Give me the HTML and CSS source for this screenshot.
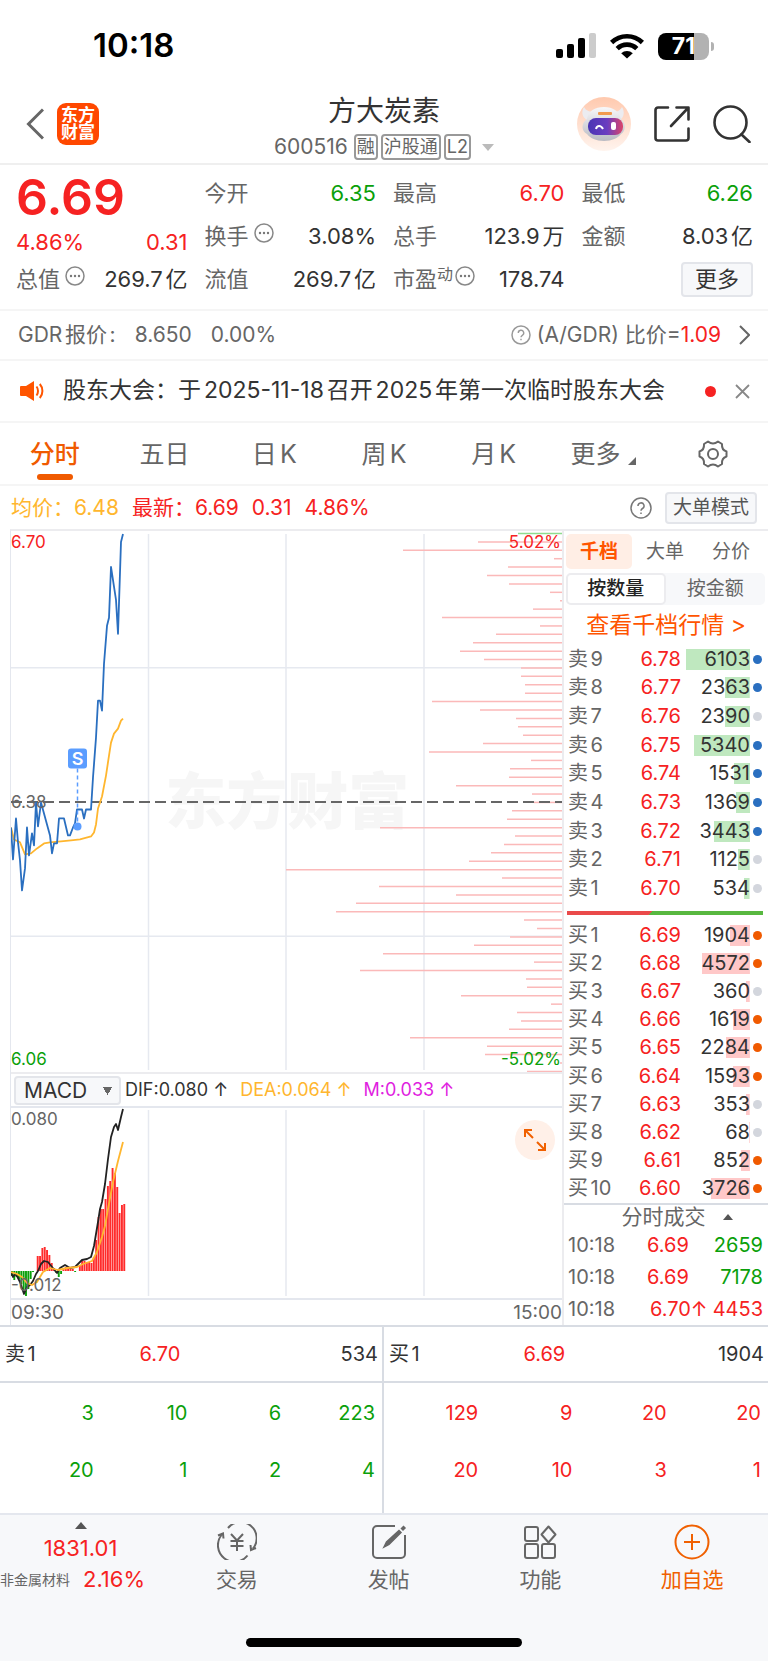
FILE: index.html
```html
<!DOCTYPE html>
<html lang="zh-CN">
<head>
    <meta charset="UTF-8">
    <meta name="viewport" content="width=device-width, initial-scale=1.0">
    <title>方大炭素 600516</title>
    <link rel="stylesheet" href="styles.css">
</head>
<body>
    <div class="status-bar">
        <span class="time">10:18</span>
        <div class="status-icons">
            <svg width="40" height="26" viewBox="0 0 40 26">
                <rect x="0" y="16" width="7" height="9" rx="2"/>
                <rect x="11" y="11" width="7" height="14" rx="2"/>
                <rect x="22" y="5" width="7" height="20" rx="2"/>
                <rect x="33" y="0" width="7" height="25" rx="2" fill="#ccc"/>
            </svg>
            <svg width="34" height="26" viewBox="0 0 34 26">
                <g fill="none" stroke="#000" stroke-width="4.6">
                    <path d="M1.6 9.5a22 22 0 0 1 30.8 0"/>
                    <path d="M7.2 15.6a14 14 0 0 1 19.6 0"/>
                </g>
                <path d="M11.2 20.2a8.5 8.5 0 0 1 11.6 0L17 25.6z"/>
            </svg>
            <div class="battery"><span>71</span></div>
        </div>
    </div>

    <header class="header">
        <div class="header-left">
            <button class="icon-button" aria-label="返回">
                <svg width="18" height="32" viewBox="0 0 18 32" fill="none" stroke="#666" stroke-width="3"><path d="M17 1.5L2.5 16 17 30.5"/></svg>
            </button>
            <a href="#" class="logo">东方<br>财富</a>
        </div>
        <div class="header-title">
            <h1>方大炭素</h1>
            <div class="code">
                <span>600516</span>
                <span class="tag">融</span>
                <span class="tag">沪股通</span>
                <span class="tag">L2</span>
                <svg class="code-arrow" width="12" height="7" viewBox="0 0 12 7"><path d="M0 0h12L6 7z" fill="#bbb"/></svg>
            </div>
        </div>
        <div class="header-right">
            <button class="icon-button" aria-label="智能助手">
                <svg width="54" height="54" viewBox="0 0 54 54">
                    <defs>
                        <linearGradient id="halo" x1="0" y1="0" x2="0" y2="1"><stop offset="0" stop-color="#ffc9ae"/><stop offset="1" stop-color="#fff4ee"/></linearGradient>
                        <linearGradient id="visor" x1="0" y1="0" x2="1" y2="0"><stop offset="0" stop-color="#4a35b4"/><stop offset="0.55" stop-color="#6a3cc0"/><stop offset="1" stop-color="#dc4468"/></linearGradient>
                        <linearGradient id="shell" x1="0" y1="0" x2="0" y2="1"><stop offset="0" stop-color="#f8f8fa"/><stop offset="1" stop-color="#b9bac2"/></linearGradient>
                    </defs>
                    <circle cx="27" cy="27" r="27" fill="url(#halo)"/>
                    <path d="M7 10c-3 5-2 10 3 13l8-8c-5 0-9-1-11-5zM45 10c3 5 2 10-2 13l-8-8c5 0 8-1 10-5z" fill="#ececf0"/>
                    <path d="M10 22C11 14 18 10 27 10s15 4 17 12c5 4 5 12 0 15-3 4-9 7-17 7s-14-3-17-7c-6-3-6-11 0-15z" fill="url(#shell)"/>
                    <rect x="21" y="15" width="14" height="3" rx="1" fill="#f19a50"/>
                    <rect x="11" y="21" width="35" height="17" rx="8" fill="url(#visor)"/>
                    <path d="M19 32c1-4 5-4 7 0" fill="none" stroke="#fff" stroke-width="2"/>
                    <rect x="34" y="25" width="5" height="8" rx="2" fill="#fff"/>
                </svg>
            </button>
            <button class="icon-button" aria-label="分享">
                <svg width="36" height="36" viewBox="0 0 36 36" fill="none" stroke="#333" stroke-width="2.6" stroke-linecap="round" stroke-linejoin="round">
                    <path d="M14 1.5H4A2.5 2.5 0 0 0 1.5 4v28A2.5 2.5 0 0 0 4 34.5h28A2.5 2.5 0 0 0 34.5 32V22.5M22.5 1.5h12v12M34 2L17 20"/>
                </svg>
            </button>
            <button class="icon-button" aria-label="搜索">
                <svg width="38" height="38" viewBox="0 0 38 38" fill="none" stroke="#333" stroke-width="2.6" stroke-linecap="round"><circle cx="17.5" cy="17.5" r="16"/><path d="M28.5 29.5l8 7.5"/></svg>
            </button>
        </div>
    </header>

    <section class="quote">
        <div class="quote-col">
            <div class="price">6.69</div>
            <div class="change"><span>4.86%</span><span>0.31</span></div>
            <div class="item"><span class="label">总值<svg class="dots" viewBox="0 0 20 20"><use href="#dots"/></svg></span><span>269.7亿</span></div>
        </div>
        <div class="quote-col">
            <div class="item"><span class="label">今开</span><span class="green">6.35</span></div>
            <div class="item"><span class="label">换手<svg class="dots" viewBox="0 0 20 20"><use href="#dots"/></svg></span><span>3.08%</span></div>
            <div class="item"><span class="label">流值</span><span>269.7亿</span></div>
        </div>
        <div class="quote-col">
            <div class="item"><span class="label">最高</span><span class="red">6.70</span></div>
            <div class="item"><span class="label">总手</span><span>123.9万</span></div>
            <div class="item"><span class="label">市盈<sup>动</sup><svg class="dots" viewBox="0 0 20 20"><g id="dots"><circle cx="10" cy="10" r="9" fill="none" stroke="#888" stroke-width="1.5"/><circle cx="6" cy="10" r="1.2" fill="#777"/><circle cx="10" cy="10" r="1.2" fill="#777"/><circle cx="14" cy="10" r="1.2" fill="#777"/></g></svg></span><span>178.74</span></div>
        </div>
        <div class="quote-col">
            <div class="item"><span class="label">最低</span><span class="green">6.26</span></div>
            <div class="item"><span class="label">金额</span><span>8.03亿</span></div>
            <div class="item item-more"><button class="box-button">更多</button></div>
        </div>
    </section>

    <section class="gdr">
        <span>GDR报价:</span><span>8.650</span><span>0.00%</span>
        <a href="#" class="gdr-link">
            <svg width="20" height="20" viewBox="0 0 20 20"><circle cx="10" cy="10" r="9" fill="none" stroke="#999" stroke-width="1.5"/><path d="M7.3 8a2.7 2.7 0 1 1 4 2.3c-1 .6-1.3 1-1.3 2M10 13.7v1.5" fill="none" stroke="#999" stroke-width="1.4"/></svg>
            <span>(A/GDR) 比价=<b>1.09</b></span>
            <svg class="chevron" width="11" height="20" viewBox="0 0 11 20" fill="none" stroke="#666" stroke-width="2"><path d="M1 1l9 9-9 9"/></svg>
        </a>
    </section>

    <section class="notice">
        <svg width="24" height="22" viewBox="0 0 24 22"><path d="M1 6h5l8-5v20l-8-5H1a1 1 0 0 1-1-1V7a1 1 0 0 1 1-1z" fill="#ff5500"/><path d="M16.5 6.5c2 2.5 2 6.5 0 9M19.8 4c3.5 4 3.5 10 0 14" fill="none" stroke="#ff5500" stroke-width="2"/></svg>
        <a href="#">股东大会：于2025-11-18召开2025年第一次临时股东大会</a>
        <i class="unread"></i>
        <button class="icon-button" aria-label="关闭"><svg width="15" height="15" viewBox="0 0 15 15" stroke="#888" stroke-width="1.8"><path d="M1 1l13 13M14 1L1 14"/></svg></button>
    </section>

    <nav class="tabs">
        <button class="active">分时</button>
        <button>五日</button>
        <button>日K</button>
        <button>周K</button>
        <button>月K</button>
        <button class="tab-more">更多<svg width="8" height="8" viewBox="0 0 8 8"><path d="M8 0v8H0z" fill="#666"/></svg></button>
        <button aria-label="设置">
            <svg width="30" height="28" viewBox="0 0 30 28" fill="none" stroke="#666" stroke-width="2" stroke-linejoin="round"><path d="M10 1.5Q15 5.5 20 1.5L24 4Q23.5 10 28.5 11.5V16.5Q23.5 18 24 24L20 26.5Q15 22.5 10 26.5L6 24Q6.5 18 1.5 16.5V11.5Q6.5 10 6 4Z"/><circle cx="15" cy="14" r="5"/></svg>
        </button>
    </nav>

    <section class="info">
        <span class="orange">均价：6.48</span>
        <span class="red">最新：6.69</span>
        <span class="red">0.31</span>
        <span class="red">4.86%</span>
        <svg class="info-help" width="22" height="22" viewBox="0 0 22 22"><circle cx="11" cy="11" r="10" fill="none" stroke="#777" stroke-width="1.5"/><path d="M8 9a3 3 0 1 1 4.5 2.5c-1.2.7-1.5 1.2-1.5 2.3M11 15.5V17" fill="none" stroke="#777" stroke-width="1.5"/></svg>
        <button class="box-button box-button-small">大单模式</button>
    </section>

    <main class="board">
        <div class="charts">
            <div class="chart">
                <div class="watermark">东方财富</div>
                <svg viewBox="0 0 551 542" preserveAspectRatio="none">
                    <path class="grid" d="M137.5 3V540M275 3V540M413 3V540M0 137H551M0 406H551"/>
                    <g id="volume"></g>
                    <path d="M0 271.5H551" stroke="#666" stroke-width="2" stroke-dasharray="11 5"/>
                    <polyline class="line" stroke="#ffb62e" points="0,297 3,309 9,312 14,324 20,323 26,318 33,313 39,312 50,311 60,310 69,309 80,306 83,302 85,294 87,278 91,266 95,245 98,225 100,212 103,203 107,198 110,190 112,188"/>
                    <polyline class="line" stroke="#2a6fc0" points="0,297 2,329 5,288 7,312 9,330 11,360 14,338 16,297 18,325 21,303 23,315 25,272 27,296 30,272 39,305 41,323 43,313 46,313 48,288 53,288 57,305 59,305 62,297 64,293 66,279 71,279 73,288 75,279 80,279 82,247 85,207 87,170 89,170 91,180 93,133 96,95 98,87 100,36 105,69 107,103 110,11 112,3"/>
                    <path d="M66.5 238V292" stroke="#5b9dff" stroke-width="1.5" stroke-dasharray="4 3"/>
                    <circle cx="66.5" cy="296" r="4" fill="#5b9dff"/>
                    <rect x="57" y="218" width="19" height="20" rx="3" fill="#5b9dff"/>
                    <text x="66.5" y="234" class="sell-mark">S</text>
                </svg>
                <span class="mark mark-top red">6.70</span>
                <span class="mark mark-middle">6.38</span>
                <span class="mark mark-bottom green">6.06</span>
                <span class="mark mark-top mark-right red">5.02%</span>
                <span class="mark mark-bottom mark-right green">-5.02%</span>
            </div>
            <div class="indicator">
                <select class="indicator-select" aria-label="指标">
                    <option>MACD</option>
                    <option>KDJ</option>
                </select>
                <span>DIF:0.080 ↑</span>
                <span class="orange">DEA:0.064 ↑</span>
                <span class="purple">M:0.033 ↑</span>
            </div>
            <div class="macd">
                <svg viewBox="0 0 551 190" preserveAspectRatio="none">
                    <path class="grid" d="M137.5 2V188M275 2V188M413 2V188"/>
                    <g id="macd"></g>
                    <polyline class="line" stroke="#222" points="0,164 2,169 4,166 6,168 9,174 12,183 13,186 16,179 19,177 22,173 25,166 27,163 30,156 33,153 37,154 41,159 46,165 49,160 54,157 59,160 64,159 71,152 76,151 80,149 83,138 87,114 89,101 91,94 94,76 97,51 100,29 103,19 105,16 107,22 110,9 112,1"/>
                    <polyline class="line" stroke="#ffb62e" points="0,164 6,166 11,169 16,175 21,177 26,174 32,164 39,160 47,162 56,160 66,159 72,156 81,153 86,144 91,129 94,118 97,101 102,74 107,53 112,34"/>
                </svg>
                <span class="mark mark-top">0.080</span>
                <span class="mark mark-bottom">-0.012</span>
                <button class="expand" aria-label="全屏">
                    <svg width="22" height="22" viewBox="0 0 22 22" fill="none" stroke="#f06000" stroke-width="2"><path d="M1 8V1h7M1 1l8 8M21 14v7h-7M21 21l-8-8"/></svg>
                </button>
            </div>
            <div class="axis"><span>09:30</span><span>15:00</span></div>
        </div>

        <aside class="book">
            <div class="book-tabs">
                <button class="active">千档</button>
                <button>大单</button>
                <button>分价</button>
            </div>
            <div class="segment">
                <button class="active">按数量</button>
                <button>按金额</button>
            </div>
            <a href="#" class="book-link">查看千档行情 &gt;</a>
            <table class="levels levels-sell" id="sell"></table>
            <div class="ratio"></div>
            <table class="levels levels-buy" id="buy"></table>
            <button class="trades-title">分时成交<svg width="10" height="6" viewBox="0 0 10 6"><path d="M0 6h10L5 0z" fill="#555"/></svg></button>
            <table class="trades">
                <tr><td>10:18</td><td>6.69</td><td class="green">2659</td></tr>
                <tr><td>10:18</td><td>6.69</td><td class="green">7178</td></tr>
                <tr><td>10:18</td><td class="up">6.70↑</td><td class="red">4453</td></tr>
            </table>
        </aside>
    </main>

    <section class="queue">
        <div class="queue-side">
            <div class="queue-head"><span>卖1</span><span class="red">6.70</span><span>534</span></div>
            <table class="green">
                <tr><td>3</td><td>10</td><td>6</td><td>223</td></tr>
                <tr><td>20</td><td>1</td><td>2</td><td>4</td></tr>
            </table>
        </div>
        <div class="queue-side">
            <div class="queue-head"><span>买1</span><span class="red">6.69</span><span>1904</span></div>
            <table class="red">
                <tr><td>129</td><td>9</td><td>20</td><td>20</td></tr>
                <tr><td>20</td><td>10</td><td>3</td><td>1</td></tr>
            </table>
        </div>
    </section>

    <footer class="footer">
        <div class="toolbar">
            <a href="#" class="sector">
                <svg width="12" height="7" viewBox="0 0 12 7"><path d="M0 7h12L6 0z" fill="#555"/></svg>
                <span class="sector-index">1831.01</span>
                <span class="sector-row"><small>非金属材料</small>2.16%</span>
            </a>
            <a href="#">
                <svg width="40" height="36" viewBox="0 0 40 36" fill="none" stroke="#666" stroke-width="2"><path d="M11 4A16 16 0 0 1 36 24.500M30.500 31.500A16 16 0 0 1 4.500 11M1 11.500l5-2 .5 5M39 24l-5 2-.5-5"/><path d="M14 10l6 6.500 6-6.500M20 16.500V27M13.500 17h13M13.500 22h13"/></svg>
                <span>交易</span>
            </a>
            <a href="#">
                <svg width="36" height="36" viewBox="0 0 36 36" fill="none" stroke="#666" stroke-width="2"><path d="M24 2H6a4 4 0 0 0-4 4v24a4 4 0 0 0 4 4h24a4 4 0 0 0 4-4V11"/><path d="M13 23l2.500-5L28 6.500l2 2L18 20.500zM30.500 4.500L32.500 2.500l1.500 1.500-2 2z" fill="#666" stroke-width="1.5"/></svg>
                <span>发帖</span>
            </a>
            <a href="#">
                <svg width="34" height="36" viewBox="0 0 34 36" fill="none" stroke="#666" stroke-width="2"><rect x="2" y="3" width="13" height="14" rx="2"/><rect x="2" y="20" width="13" height="14" rx="2"/><rect x="19" y="20" width="13" height="14" rx="2"/><path d="M25.500 2.500l7 8-7 8-7-8z" stroke-linejoin="round"/></svg>
                <span>功能</span>
            </a>
            <a href="#" class="add">
                <svg width="36" height="36" viewBox="0 0 36 36" fill="none" stroke="#f06000" stroke-width="2"><circle cx="18" cy="18" r="16.5"/><path d="M18 10v16M10 18h16"/></svg>
                <span>加自选</span>
            </a>
        </div>
        <div class="home-bar"></div>
    </footer>

    <script src="script.js"></script>
</body>
</html>
```
FILE: styles.css
```css
* {
    box-sizing: border-box;
}
body {
    margin: 0;
    background-color: #fff;
    color: #333;
    font-family: Inter, "Noto Sans CJK SC", sans-serif;
    font-size: 21px;
    line-height: 1.2;
    text-autospace: normal;
}
button,
select {
    font: inherit;
    color: inherit;
    background: none;
    border: none;
    padding: 0;
    margin: 0;
    cursor: pointer;
}
a {
    color: inherit;
    text-decoration: none;
}
svg {
    display: block;
    flex-shrink: 0;
}
table {
    width: 100%;
    border-collapse: collapse;
    table-layout: fixed;
}
td {
    padding: 0;
}
.red {
    color: #f62222;
}
.green {
    color: #0aa00a;
}
.orange {
    color: #ffb62e;
}
.purple {
    color: #e01ee0;
}
.icon-button {
    display: flex;
}

/* status bar */
.status-bar {
    display: flex;
    justify-content: space-between;
    align-items: center;
    height: 85px;
    padding: 7px 57px 0 93px;
    color: #000;
}
.time {
    font-size: 33px;
    font-weight: 600;
}
.status-icons {
    display: flex;
    align-items: center;
    gap: 14px;
}
.battery {
    position: relative;
    width: 51px;
    height: 27px;
    margin-right: 2px;
    border-radius: 8px;
    background: linear-gradient(to right, #000 71%, #b2b2b2 71%);
    color: #fff;
    font-size: 23px;
    font-weight: 700;
    line-height: 27px;
    text-align: center;
}
.battery::after {
    content: "";
    position: absolute;
    right: -5px;
    top: 9px;
    width: 3px;
    height: 9px;
    border-radius: 0 3px 3px 0;
    background-color: #b2b2b2;
}

/* header */
.header {
    display: grid;
    grid-template-columns: 1fr auto 1fr;
    align-items: center;
    padding: 0 17px;
    height: 80px;
    border-bottom: 2px solid #efefef;
}
.header-left,
.header-right {
    display: flex;
    align-items: center;
}
.header-left {
    gap: 13px;
    padding-left: 9px;
}
.header-right {
    justify-content: flex-end;
    gap: 23px;
}
.logo {
    padding: 4px;
    border-radius: 9px;
    background-color: #ff4800;
    color: #fff;
    font-size: 17px;
    font-weight: 700;
    line-height: 17px;
}
.header-title h1 {
    margin: 0;
    font-size: 28px;
    font-weight: 400;
    line-height: 46px;
    text-align: center;
}
.code {
    display: flex;
    align-items: center;
    gap: 3px;
    color: #666;
}
.code span:first-child {
    margin-right: 3px;
}
.tag {
    border: 2px solid #999;
    border-radius: 4px;
    padding: 0 1px;
    font-size: 18px;
    line-height: 22px;
}
.code-arrow {
    margin-left: 8px;
}

/* quote */
.quote {
    display: grid;
    grid-template-columns: repeat(4, 1fr);
    gap: 17px;
    padding: 7px 15px 8px 16px;
    font-size: 22px;
    border-bottom: 2px solid #f5f5f5;
}
.price {
    color: #f62222;
    font-size: 50px;
    font-weight: 600;
    line-height: 50px;
}
.change {
    display: flex;
    justify-content: space-between;
    color: #f62222;
    line-height: 36px;
    padding-top: 2px;
    margin-bottom: -2px;
}
.item {
    display: flex;
    justify-content: space-between;
    align-items: center;
    height: 43px;
    white-space: nowrap;
}
.item-more {
    justify-content: flex-end;
}
.label {
    display: flex;
    color: #666;
}
.label sup {
    font-size: 16px;
    line-height: 16px;
    vertical-align: top;
}
.dots {
    width: 20px;
    height: 20px;
    margin-left: 5px;
}
.label sup + .dots {
    margin-left: 2px;
}
.box-button {
    padding: 0 12px;
    border: 2px solid #e3e5ea;
    border-radius: 4px;
    background-color: #f7f8fa;
    line-height: 31px;
}
.box-button-small {
    padding: 0 6px;
    color: #555;
    font-size: 19px;
    line-height: 28px;
}

/* GDR and notice */
.gdr {
    display: flex;
    align-items: center;
    gap: 19px;
    height: 50px;
    padding: 0 18px;
    color: #666;
    border-bottom: 2px solid #f5f5f5;
}
.gdr-link {
    display: flex;
    align-items: center;
    gap: 6px;
    margin-left: auto;
}
.gdr-link b {
    color: #f62222;
    font-weight: 400;
}
.chevron {
    margin-left: 12px;
}
.notice {
    display: flex;
    align-items: center;
    height: 62px;
    padding: 0 18px 0 20px;
    font-size: 23px;
    border-bottom: 2px solid #f5f5f5;
}
.notice a {
    margin: 0 auto 0 19px;
    white-space: nowrap;
}
.unread {
    width: 11px;
    height: 11px;
    margin-right: 19px;
    border-radius: 50%;
    background-color: #f62222;
}

/* period tabs */
.tabs {
    display: grid;
    grid-template-columns: repeat(7, 1fr);
    height: 63px;
    color: #666;
    font-size: 25px;
    border-bottom: 2px solid #f5f5f5;
}
.tabs button {
    position: relative;
    display: flex;
    align-items: center;
    justify-content: center;
}
.tabs .active {
    color: #f05a00;
    font-weight: 500;
}
.tabs .active::after {
    content: "";
    position: absolute;
    bottom: 4px;
    width: 36px;
    height: 6px;
    border-radius: 3px;
    background-color: #f05a00;
}
.tab-more svg {
    align-self: flex-end;
    margin: 0 0 19px 8px;
}
.info {
    display: flex;
    align-items: center;
    gap: 13px;
    height: 43px;
    padding: 0 11px;
}
.info-help {
    margin-left: auto;
}

/* charts */
.board {
    display: grid;
    grid-template-columns: 1fr 206px;
    border-bottom: 2px solid #d8dce3;
}
.charts {
    margin-left: 10px;
    border-top: 2px solid #ececef;
    border-left: 1px solid #e4e7ee;
}
.chart,
.macd {
    position: relative;
    font-size: 17px;
    color: #666;
}
.chart svg {
    position: relative;
    width: 100%;
    height: 541px;
}
.macd > svg {
    width: 100%;
    height: 190px;
}
.grid {
    stroke: #e6e9f0;
    stroke-width: 1.5;
}
.line {
    fill: none;
    stroke-width: 1.8;
    stroke-linejoin: round;
}
.sell-mark {
    fill: #fff;
    font-size: 18px;
    font-weight: 600;
    text-anchor: middle;
}
.watermark {
    position: absolute;
    top: 50%;
    left: 28%;
    margin-top: -38px;
    color: #f6f6f6;
    font-size: 61px;
    font-weight: 900;
    line-height: 76px;
}
.mark {
    position: absolute;
    left: 0;
    line-height: 20px;
}
.mark-top {
    top: 1px;
}
.mark-middle {
    top: 261px;
}
.mark-bottom {
    bottom: 3px;
}
.mark-right {
    left: auto;
    right: 1px;
}
.indicator {
    display: flex;
    align-items: center;
    gap: 12px;
    height: 36px;
    font-size: 18px;
    border-top: 2px solid #ececef;
    border-bottom: 2px solid #e4e7ee;
}
.indicator-select {
    width: 107px;
    height: 29px;
    margin: 0 -8px 0 3px;
    padding: 0 8px;
    border: 2px solid #e3e5ea;
    border-radius: 4px;
    background: conic-gradient(from -30deg at 50% 100%, #666 60deg, transparent 0) no-repeat 87px 9px / 9px 8px, #f7f8fa;
    font-size: 21px;
    appearance: none;
}
.expand {
    position: absolute;
    top: 12px;
    right: 7px;
    display: flex;
    align-items: center;
    justify-content: center;
    width: 40px;
    height: 40px;
    border-radius: 50%;
    background-color: #fff0e8;
}
.axis {
    display: flex;
    justify-content: space-between;
    height: 27px;
    border-top: 2px solid #e4e7ee;
    color: #666;
    font-size: 19px;
    line-height: 26px;
}

/* order book */
.book {
    display: flex;
    flex-direction: column;
    border-top: 2px solid #ececef;
    border-left: 2px solid #ececef;
}
.book-tabs {
    display: grid;
    grid-template-columns: repeat(3, 66px);
    margin: 3px 2px 4px;
    color: #666;
    font-size: 19px;
    line-height: 35px;
}
.book-tabs .active {
    border-radius: 5px;
    background-color: #ffeee5;
    color: #ff5500;
    font-weight: 700;
}
.segment {
    display: grid;
    grid-template-columns: 1fr 1fr;
    margin: 0 3px 0 2px;
    border-radius: 5px;
    background-color: #f7f8fa;
    color: #666;
    font-size: 19px;
    line-height: 28px;
}
.segment button {
    border: 2px solid transparent;
}
.segment .active {
    border-color: #ececef;
    border-radius: 5px;
    background-color: #fff;
    color: #222;
    font-weight: 500;
}
.book-link {
    color: #ff5500;
    font-size: 23px;
    line-height: 40px;
    text-align: center;
}
.levels {
    height: 258px;
    font-size: 20px;
    line-height: 21px;
}
.levels-buy {
    height: 282px;
}
.levels td:first-child {
    width: 54px;
    padding-left: 4px;
    color: #666;
    white-space: nowrap;
}
.levels td:nth-child(2) {
    width: 63px;
    color: #f62222;
    text-align: right;
}
.levels td:nth-child(3) {
    width: 69px;
    padding-left: 5px;
}
.amount {
    display: block;
    text-align: right;
    background: linear-gradient(#bfe8bf, #bfe8bf) no-repeat right / var(--bar) 100%;
}
.levels-buy .amount {
    background-image: linear-gradient(#ffc8c8, #ffc8c8);
}
.dot {
    display: block;
    width: 9px;
    height: 9px;
    margin-left: 3px;
    border-radius: 50%;
    background-color: #d3d6dd;
}
.levels-sell .big {
    background-color: #2a6fc0;
}
.levels-buy .big {
    background-color: #f05a00;
}
.ratio {
    height: 4px;
    margin: 8px 5px 6px 3px;
    background: linear-gradient(135deg, #ea4a4a 43%, #58b840 43%);
}
.trades-title {
    display: flex;
    align-items: center;
    justify-content: center;
    gap: 17px;
    padding-left: 22px;
    border-top: 2px solid #d8dce3;
    color: #666;
    line-height: 24px;
}
.trades {
    font-size: 20px;
    line-height: 32px;
}
.trades td:first-child {
    padding-left: 4px;
    color: #666;
}
.trades td:nth-child(2) {
    padding-left: 4px;
    color: #f62222;
    text-align: center;
}
.trades td:last-child {
    padding-right: 5px;
    text-align: right;
}
.trades td.up {
    padding-left: 18px;
}

/* order queue */
.queue {
    display: grid;
    grid-template-columns: 1fr 1fr;
    border-bottom: 2px solid #e4e7ee;
}
.queue-side:first-child {
    border-right: 2px solid #d8dce3;
}
.queue-head {
    display: grid;
    grid-template-columns: 12% 35% 1fr;
    padding: 0 4px 0 5px;
    border-bottom: 2px solid #d8dce3;
    font-size: 20px;
    line-height: 54px;
    text-align: right;
    white-space: nowrap;
}
.queue-head span:first-child {
    text-align: left;
}
.queue td {
    height: 57px;
    text-align: right;
}
.queue table {
    width: calc(100% - 7px);
    margin: 1px 0 15px;
    font-size: 20px;
}

/* bottom toolbar */
.footer {
    padding-bottom: 14px;
    background-color: #f7f8fa;
}
.toolbar {
    display: grid;
    grid-template-columns: 161px repeat(4, 1fr);
    height: 117px;
    color: #666;
}
.toolbar a {
    display: flex;
    flex-direction: column;
    align-items: center;
    padding-top: 9px;
    line-height: 40px;
}
.toolbar .sector {
    padding-top: 7px;
    color: #f62222;
    font-size: 22px;
    line-height: 31px;
}
.sector-index {
    margin-top: 4px;
}
.sector-row {
    display: flex;
    align-items: center;
    gap: 13px;
    width: 100%;
    white-space: nowrap;
}
.sector-row small {
    color: #666;
    font-size: 14px;
}
.toolbar .add {
    color: #f06000;
}
.home-bar {
    width: 36%;
    height: 9px;
    margin: 6px auto 0;
    border-radius: 5px;
    background-color: #000;
}
```
FILE: script.js
```javascript
// volume at each price, from the highest price down
const volume = [44, 84, 159, 8, 54, 75, 53, 12, 2, 29, 120, 22, 66, 89, 102, 78, 41, 41, 37, 37, 130, 82, 46, 44, 39,
    79, 133, 31, 52, 53, 106, 30, 28, 50, 55, 182, 47, 58, 71, 93, 276, 60, 183, 106, 206, 226, 38, 25, 52, 88, 179,
    28, 202, 36, 35, 101, 11, 45, 41, 53, 152, 75, 77, 2, 35];

// one MACD bar per minute
const macd = [-5, -9, -6, -8, -13, -20, -25, -18, -8, -1, 0, 15, 15, 23, 24, 21, 16, 8, 3, -2, -6, -3, 2, 4, 4, 3, 2,
    -1, 0, 6, 10, 10, 9, 9, 8, 14, 31, 54, 62, 62, 72, 85, 90, 103, 98, 84, 58, 66, 67];

const sell = [
    ['卖9', '6.78', 6103, true],
    ['卖8', '6.77', 2363, true],
    ['卖7', '6.76', 2390, false],
    ['卖6', '6.75', 5340, true],
    ['卖5', '6.74', 1531, true],
    ['卖4', '6.73', 1369, true],
    ['卖3', '6.72', 3443, true],
    ['卖2', '6.71', 1125, false],
    ['卖1', '6.70', 534, false]
];
const buy = [
    ['买1', '6.69', 1904, true],
    ['买2', '6.68', 4572, true],
    ['买3', '6.67', 360, false],
    ['买4', '6.66', 1619, true],
    ['买5', '6.65', 2284, true],
    ['买6', '6.64', 1593, true],
    ['买7', '6.63', 353, false],
    ['买8', '6.62', 68, false],
    ['买9', '6.61', 852, true],
    ['买10', '6.60', 3726, true]
];

document.getElementById('volume').innerHTML = volume.map((v, i) => {
    const y = 2.5 + i * 8.42;
    return `<path d="M${551 - v} ${y}H551" stroke="${i === 0 ? '#8fdc8f' : '#fbb9b9'}" stroke-width="1.5"/>`;
}).join('');

document.getElementById('macd').innerHTML = macd.map((v, i) =>
    `<rect x="${i * 2.34}" y="${v > 0 ? 163 - v : 163}" width="1.9" height="${Math.abs(v)}" fill="${v > 0 ? '#ff2b2b' : '#0aa00a'}"/>`
).join('');

function renderLevels(id, rows) {
    document.getElementById(id).innerHTML = rows.map(([name, price, amount, big]) => `
        <tr>
            <td>${name}</td>
            <td>${price}</td>
            <td><span class="amount" style="--bar: ${(amount / 61.03).toFixed(1)}%">${amount}</span></td>
            <td><i class="dot ${big ? 'big' : ''}"></i></td>
        </tr>`).join('');
}

renderLevels('sell', sell);
renderLevels('buy', buy);
```
